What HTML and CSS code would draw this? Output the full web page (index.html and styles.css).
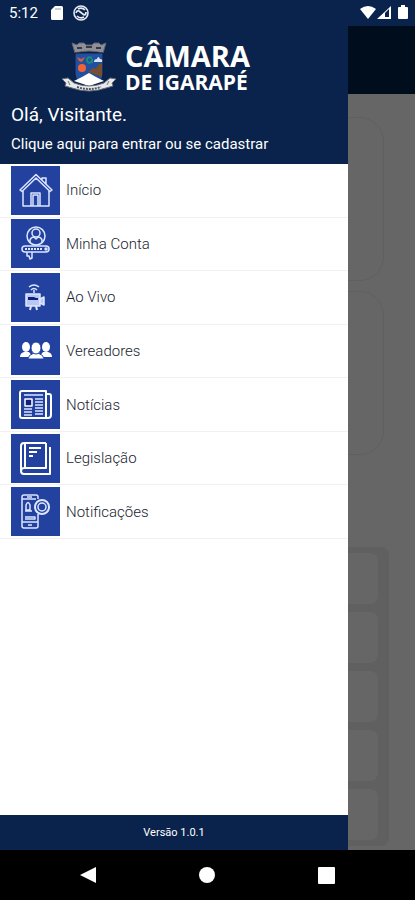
FILE: index.html
```html
<!DOCTYPE html>
<html lang="pt-BR">
<head>
<meta charset="utf-8">
<meta name="viewport" content="width=device-width, initial-scale=1">
<title>Câmara de Igarapé</title>
<link rel="stylesheet" href="styles.css">
</head>
<body>
<div class="phone">
  <header class="status">
    <div class="status-group">
      <span class="clock">5:12</span>
      <svg class="sd" width="12" height="14" viewBox="0 0 12 14"><path fill="#fff" d="M4 0h6.500q1.500 0 1.500 1.500v11q0 1.500-1.500 1.500h-9q-1.500 0-1.500-1.500v-8.500z"/><path stroke="#8f9cb5" d="M5 2v2M7 2v2M9 2v2"/></svg>
      <svg width="16" height="16" viewBox="0 0 16 16" fill="none" stroke="#e6ebf4"><circle cx="8" cy="8" r="7" stroke-width="1.600"/><path stroke-width="1.700" d="M3 8q1-3 3-2l5 4q2 0 2-3M5 4q4-2 7 1M4 11q3 3 7 1"/></svg>
    </div>
    <svg width="48" height="16" viewBox="0 0 48 16"><g fill="#fff"><path d="M0 4q8-6 16 0l-8 10z"/><path d="M31 1v13h-14z"/><path d="M39 2h2v-2h4v2h2q1 0 1 1v10q0 1-1 1h-8q-1 0-1-1v-10q0-1 1-1z"/></g><path fill="#0a234c" d="M25 8l4-4v8h-4z"/></svg>
  </header>

  <div class="stage">
    <main class="page">
      <div class="appbar"></div>
      <div class="content">
        <div class="card"></div>
        <div class="card"></div>
        <div class="panel"><div></div><div></div><div></div><div></div><div></div></div>
      </div>
    </main>

    <aside class="drawer">
      <div class="profile">
        <div class="brand">
          <svg width="56" height="52" viewBox="0 0 56 52">
            <path fill="#8e9096" stroke="#5c6373" d="M11 2l5 2 2-2h5l2 2h6l2-2h5l2 2 5-2-3 10q-14-4-28 0z"/>
            <path stroke="#343944" stroke-width="2" d="M16 7h5M25 6h6M35 7h5"/>
            <path fill="#234fa0" stroke="#101c38" d="M14 12h28v21q0 9-14 12-14-3-14-12z"/>
            <path fill="#cf6042" d="M16 16l4 2 4-2-3 5-3-1z"/>
            <path fill="none" stroke="#188d7d" stroke-width="2" d="M31 17q-5-2-5 2t5 2v-3"/>
            <path fill="#d8e4f3" d="M33 21q0-3 3-3 1-4 3 0 3 0 2 3z"/>
            <circle cx="21" cy="27" r="4" fill="#f36434"/>
            <path fill="#76502e" d="M27 31l5-4 3 1 3-5 3-1v14l-8-3z"/>
            <path fill="#fff" d="M13 40l8-4 7-4 7 4 8 4-15 5z"/>
            <path fill="#e9e9e9" stroke="#656d7c" d="M1 38l6-1 6 5q15 6 30 0l6-5 6 1-4 4 1 3-7 2q-17 6-34 0l-7-2 1-3z"/>
            <path fill="none" stroke="#525866" stroke-width="2" stroke-dasharray="2 1" d="M16 46q12 4 24 0"/>
            <path stroke="#777" d="M7 40l2 4M46 44l2-4"/>
          </svg>
          <h1><span class="brand-top">CÂMARA</span><span class="brand-bottom">DE IGARAPÉ</span></h1>
        </div>
        <p class="hello">Olá, Visitante.</p>
        <a class="login" href="#">Clique aqui para entrar ou se cadastrar</a>
      </div>
      <nav>
        <ul class="menu">
          <li><a href="#"><svg class="tile" viewBox="0 0 49 49"><g class="line"><path d="M9 24L25 8.500 41 24l-2 1.500L25 12 11 25.500zM12 25v15h26V25M20 40V27h9v13M22 40V29h5v11M31 14v-2h4v6"/></g></svg>Início</a></li>
          <li><a href="#"><svg class="tile" viewBox="0 0 49 49"><g class="line"><circle cx="25" cy="17" r="9"/><circle cx="25" cy="14" r="4"/><path d="M19 23v-2q1-3 4-3l2 2 2-2q3 0 4 3v2"/><rect x="11" y="27" width="27" height="6" rx="3"/><path stroke-width="2" stroke-dasharray="2 1" d="M14 30h18"/><circle cx="35" cy="30" r="1"/><path d="M16 33v4h2l1 3 2-1v-6"/></g></svg>Minha Conta</a></li>
          <li><a href="#"><svg class="tile" viewBox="0 0 49 49"><g class="line"><path d="M18 14q5-4 10 0M20 17q3-3 6 0M23 17v3"/><path class="pale" d="M15 21h14v12H15z"/><path class="dark" d="M17 24h6l2 1h2v2H17z"/><path class="pale" d="M29 26l4-2v8l-4-2z"/><path stroke-width="2" d="M20 33l-1 4M25 33l1 4"/></g></svg>Ao Vivo</a></li>
          <li><a href="#"><svg class="tile" viewBox="0 0 49 49"><g class="solid"><ellipse cx="15" cy="21" rx="4" ry="5"/><ellipse cx="35" cy="21" rx="4" ry="5"/><path d="M9 31q0-4 4-5h5l4 5zM28 31l4-5h5q4 1 4 5z"/></g><g class="front"><path d="M17 33q0-4 6-6h4q6 2 6 6z"/><ellipse cx="25" cy="22" rx="5" ry="6"/></g></svg>Vereadores</a></li>
          <li><a href="#"><svg class="tile" viewBox="0 0 49 49"><g class="line bold"><path d="M11 11h24v27H11q-2 0-2-2V13q0-2 2-2zM35 14h3q2 0 2 2v19q0 3-3 3h-3"/></g><g class="line"><rect class="dark edge" x="14" y="19" width="7" height="7"/><path d="M13 15h19M24 19h8M24 22h8M24 25h8M13 29h8M13 32h8M13 35h8M24 28h8M24 31h8M24 34h8"/></g></svg>Notícias</a></li>
          <li><a href="#"><svg class="tile" viewBox="0 0 49 49"><g class="line bold"><path d="M35 9H13q-3 0-3 3v25q0 3 3 3h26V13M35 9v25H13q-3 0-3 3M14 9v25"/><path d="M18 14h12M18 18h8M18 22h4"/></g></svg>Legislação</a></li>
          <li><a href="#"><svg class="tile" viewBox="0 0 49 49"><g class="line"><path d="M27 12v-2q0-2-2-2H13q-2 0-2 2v29q0 2 2 2h12q2 0 2-2V27M11 12h14M11 35h16M17 38h4M16 10h5M14 30h10v2H14M15 23v-5q2-5 4 0v5zM14 24h7"/><circle cx="31" cy="20" r="7" stroke-width="2"/><circle cx="31" cy="20" r="4"/></g></svg>Notificações</a></li>
        </ul>
      </nav>
      <footer class="version">Versão 1.0.1</footer>
    </aside>
  </div>

  <div class="navbar">
    <button aria-label="Voltar"><svg width="18" height="18" viewBox="0 0 18 18"><path fill="#fff" d="M17 1v16L1 9z"/></svg></button>
    <button aria-label="Início"><svg width="18" height="18" viewBox="0 0 18 18"><circle cx="9" cy="9" r="8" fill="#fff"/></svg></button>
    <button aria-label="Recentes"><svg width="18" height="18" viewBox="0 0 18 18"><rect width="17" height="17" y="1" rx="1" fill="#fff"/></svg></button>
  </div>
</div>
</body>
</html>
```
FILE: styles.css
```css
* { box-sizing: border-box; }
body, h1, p, ul { margin: 0; padding: 0; }
body { font-family: Roboto, "Liberation Sans", sans-serif; background: #000; }
a { color: inherit; text-decoration: none; }
.phone { min-height: 100vh; display: flex; flex-direction: column; }
.status { height: 26px; padding: 0 7px 0 9px; display: flex; align-items: center; justify-content: space-between; background: #0a234c; color: #fff; }
.status-group { display: flex; align-items: center; gap: 10px; }
.clock { font-size: 15px; line-height: 20px; }
.sd { margin-left: 3px; }
.stage { flex: 1; display: grid; }
.page, .drawer { grid-area: 1 / 1; }
.page { background: #666; display: flex; flex-direction: column; }
.appbar { height: 68px; background: #000d1c; }
.content { padding: 23px 26px 4px 30px; flex: 1; display: flex; flex-direction: column; }
.card { height: 164px; margin: 0 5px 10px 0; border: 1px solid #606060; border-radius: 24px; }
.panel { margin-top: auto; padding: 6px 11px; display: grid; gap: 8px; background: #606060; border-radius: 8px; }
.panel div { height: 51px; background: #666; border-radius: 8px; }
.drawer { position: relative; width: calc(100% - 67px); display: flex; flex-direction: column; background: #fff; }
.profile { height: 138px; padding: 13px 11px 0; background: #0a234c; color: #fff; }
.brand { display: flex; align-items: center; gap: 8px; padding-left: 50px; height: 56px; }
.brand h1 { font-family: "Open Sans", sans-serif; font-weight: 700; display: flex; flex-direction: column; }
.brand-top { font-size: 29px; line-height: 30px; }
.brand-bottom { font-size: 21px; line-height: 22px; }
.hello { margin-top: 8px; font-size: 19px; line-height: 24px; }
.login { display: block; margin-top: 7px; font-size: 15px; line-height: 20px; }
.menu { list-style: none; height: 375px; display: grid; grid-template-rows: repeat(7, 1fr); }
.menu li { border-bottom: 1px solid #f1f1f3; }
.menu a { height: 100%; padding: 0 11px; display: flex; align-items: center; gap: 6px; font-size: 15px; font-weight: 300; color: #202430; }
.tile { width: 49px; height: 49px; flex: none; background: #2342a0; }
.line { fill: none; stroke: #dde6ff; stroke-width: 1.5; stroke-linejoin: round; }
.bold { stroke: #fff; stroke-width: 2; }
.pale { fill: #b9c8f3; }
.dark { fill: #10217d; stroke: none; }
.edge { stroke: #fff; }
.solid, .front { fill: #fff; }
.front { stroke: #2342a0; }
.version { margin-top: auto; height: 35px; display: flex; align-items: center; justify-content: center; background: #0a234c; color: #fff; font-size: 11px; }
.navbar { height: 50px; padding: 0 28px; display: grid; grid-template-columns: repeat(3, 1fr); background: #000; }
.navbar button { border: 0; padding: 0; background: none; display: flex; align-items: center; justify-content: center; }
```
